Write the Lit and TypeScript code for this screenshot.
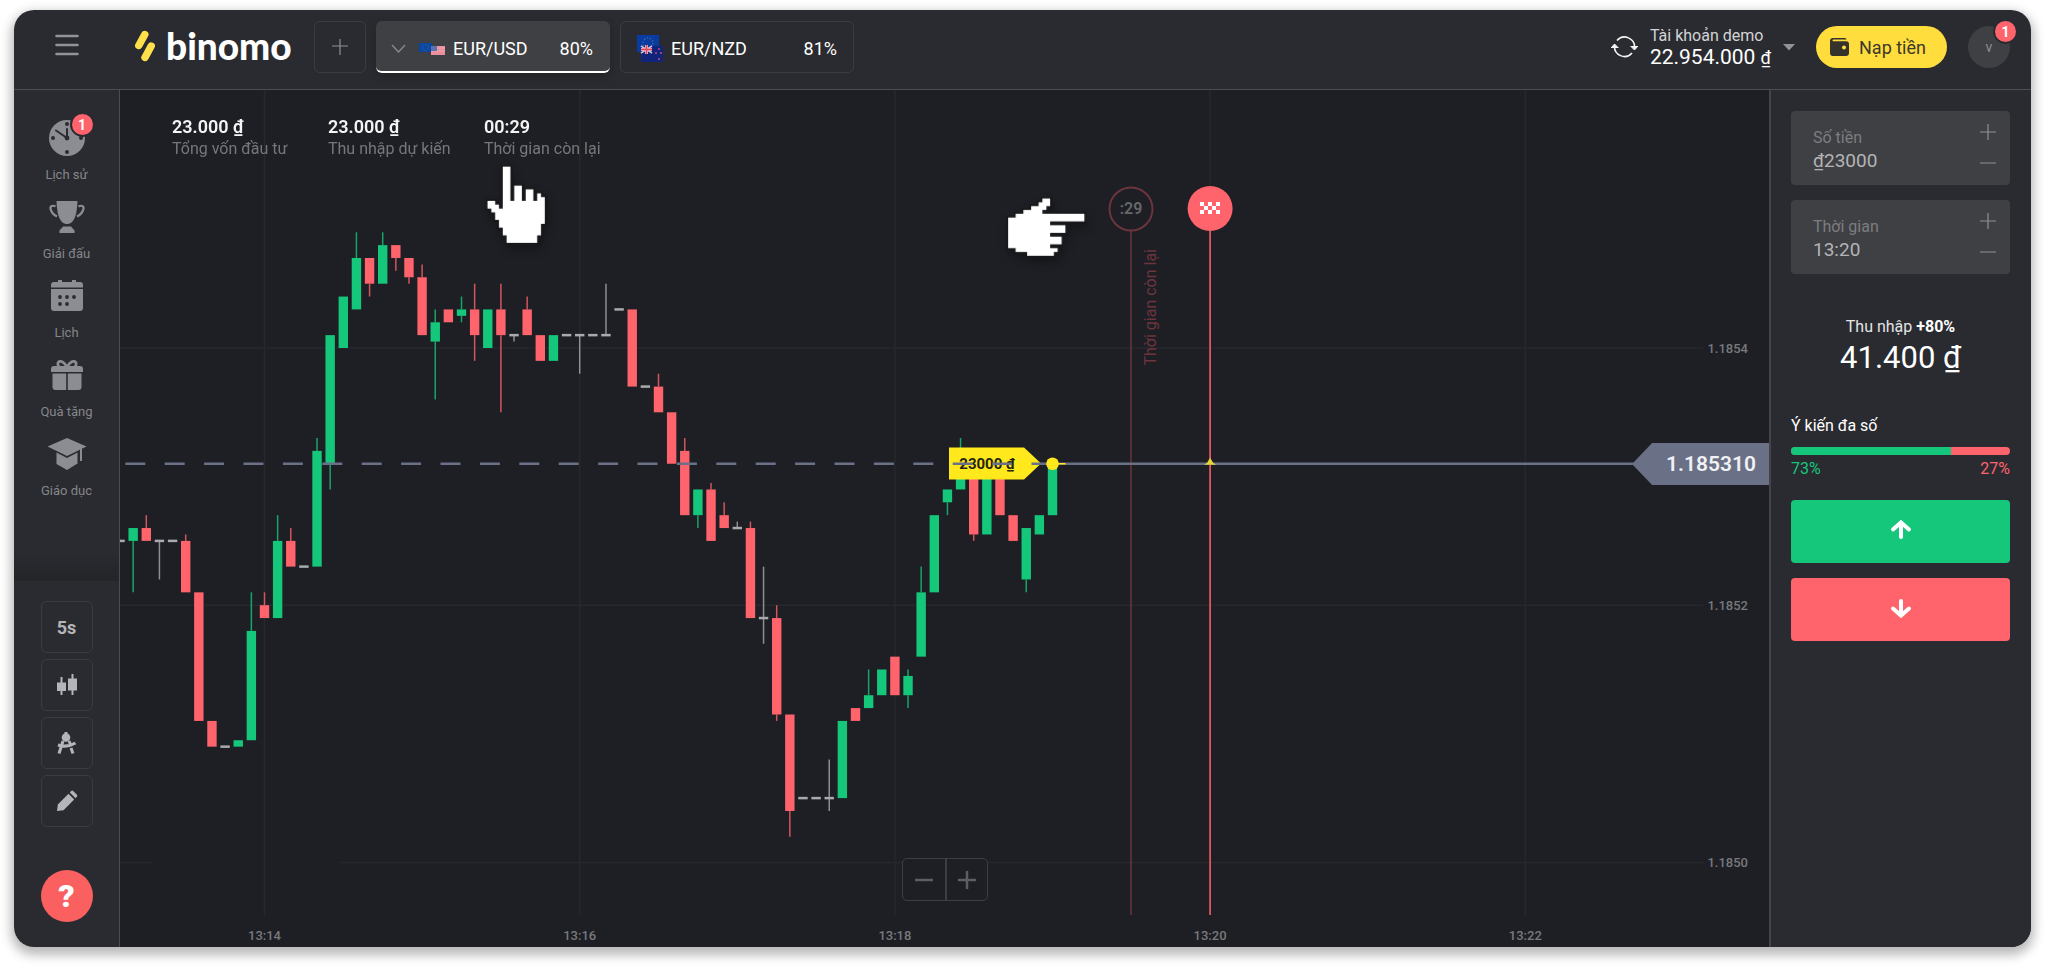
import { LitElement, html, svg, css } from "lit";
import { customElement } from "lit/decorators.js";

type Kind = "up" | "down" | "flat";

interface Candle {
  kind: Kind;
  top: number;
  bottom: number;
  high: number;
  low: number;
}

const c = (kind: Kind, top: number, bottom = top, high = top, low = bottom): Candle => ({ kind, top, bottom, high, low });
const up = (t: number, b: number, h?: number, l?: number) => c("up", t, b, h, l);
const down = (t: number, b: number, h?: number, l?: number) => c("down", t, b, h, l);
const flat = (t: number, h?: number, l?: number) => c("flat", t, t, h, l);

const FIRST_INDEX = -11;
const CANDLES: Candle[] = [
  flat(30), up(28, 30, 28, 38), down(28, 30, 26), flat(30, 30, 36), flat(30), down(30, 38, 29),
  down(38, 58), down(58, 62), flat(62), up(61, 62), up(44, 61, 38), down(40, 42, 38),
  up(30, 42, 26), down(30, 34, 28), flat(34), up(16, 34, 14), up(-2, 18, -2, 22), up(-8, 0),
  up(-14, -6, -18), down(-14, -10, -14, -8), up(-16, -10, -18), down(-16, -14, -16, -12),
  down(-14, -11, -14, -10), down(-11, -2, -13), up(-4, -1, -6, 8), down(-6, -4),
  up(-6, -5, -8, -4), down(-6, -2, -10, 2), up(-6, 0), down(-6, -2, -10, 10), flat(-2, -2, -1),
  down(-6, -2, -8), down(-2, 2), up(-2, 2), flat(-2), flat(-2, -2, 4), flat(-2), flat(-2, -10),
  flat(-6), down(-6, 6), flat(6), down(6, 10, 4), down(10, 18), down(16, 26, 14),
  up(22, 26, 22, 28), down(22, 30, 21), down(26, 28, 24), flat(28, 27), down(28, 42, 27),
  flat(42, 34, 46), down(42, 57, 40, 58), down(57, 72, 57, 76), flat(70), flat(70),
  flat(70, 64, 72), up(58, 70), down(56, 58), up(54, 56, 50), up(50, 54), down(48, 54),
  up(51, 54, 50, 56), up(38, 48, 34), up(26, 38), up(22, 24, 22, 26), up(18, 22, 14),
  down(18, 29, 18, 30), up(18, 29), down(18, 26), down(26, 30), up(28, 36, 28, 38), up(26, 29),
  up(18, 26),
];

const STEP_X = 315.2 / 24;
const STEP_Y = 6.43;
const xAt = (i: number) => 144.5 + i * STEP_X;
const yAt = (k: number) => 258 + k * STEP_Y;

const TIMES = ["13:14", "13:16", "13:18", "13:20", "13:22"];
const PRICES = ["1.1854", "1.1852", "1.1850"];
const NOW = 60;
const PRICE = yAt(18);
const REMAIN_X = 1011;
const HAND =
  "M4 0H6V9H7V5H9V9H10V6H12V9H13V7H14V8H15V15H14V18H13V20H5V18H4V16H3V14H2V12H1V11H0V9H2V10H3V11H4Z";

const icons = {
  clock: svg`<circle cx="20" cy="20" r="18"/><g fill="#2a2b30"><circle cx="20" cy="6" r="2"/><circle cx="6" cy="20" r="2"/><circle cx="34" cy="20" r="2"/><circle cx="20" cy="34" r="2"/><circle cx="20" cy="20" r="2.4"/></g><path d="M20 20V11M20 20L9 12.500" stroke="#2a2b30" stroke-width="2" stroke-linecap="round"/>`,
  trophy: svg`<path d="M9.500 4h21c-.4 9-1.500 17-5.500 21-3 2.800-7 2.800-10 0-4-4-5.100-12-5.500-21z"/><path d="M16 29.500h8l3.500 4V36h-15v-2.500z"/><path d="M8.500 9.500C6 8 3 9 3.500 11.500c.5 3.500 3.500 6.500 6.500 8M31.500 9.500C34 8 37 9 36.500 11.500c-.5 3.500-3.500 6.500-6.500 8" fill="none" stroke="#8c8d92" stroke-width="2.200"/>`,
  calendar: svg`<path d="M7 6h4V4h4v2h10V4h4v2h4q3 0 3 3v2.500H4V9q0-3 3-3zM4 13h32v19q0 3-3 3H7q-3 0-3-3z"/><g fill="#2a2b30"><circle cx="13" cy="21" r="1.900"/><circle cx="20" cy="21" r="1.900"/><circle cx="27" cy="21" r="1.900"/><circle cx="13" cy="28" r="1.900"/><circle cx="20" cy="28" r="1.900"/></g>`,
  gift: svg`<path d="M7 11h26q3 0 3 3v3H4v-3q0-3 3-3zM5.500 18.500h13.700V35H8.500Q5.500 35 5.500 32zM20.800 18.500h13.700V32q0 3-3 3H20.800z"/><path d="M19.500 11.500C16 5 10 5 11 10c.3 1.500 1 2 2 2M20.500 11.500C24 5 30 5 29 10c-.3 1.500-1 2-2 2" fill="none" stroke="#8c8d92" stroke-width="2.800"/>`,
  education: svg`<path d="M.5 12.500L20 4l19.500 8.500L20 22zM9.500 18.500L20 24l10.500-5.500v11L20 36 9.500 30z"/><path d="M34 15v12" stroke="#8c8d92" stroke-width="2"/>`,
};

const NAV = [
  { icon: icons.clock, label: "Lịch sử", badge: "1" },
  { icon: icons.trophy, label: "Giải đấu" },
  { icon: icons.calendar, label: "Lịch" },
  { icon: icons.gift, label: "Quà tặng" },
  { icon: icons.education, label: "Giáo dục" },
];

@customElement("price-chart")
export class PriceChart extends LitElement {
  static styles = css`
    :host { display: grid; min-width: 0; background: #1e1f24; font-family: Roboto, "Liberation Sans", sans-serif; overflow: hidden; }
    .plot, .stats, .tag, .zoom { grid-area: 1 / 1; }
    .plot { display: block; width: 100%; height: 100%; }
    .grid { stroke: #27282c; stroke-width: 1.500; }
    .axis { fill: #78797d; font-size: 13px; font-weight: 500; }
    .up { fill: #15c77b; stroke: #15c77b; }
    .down { fill: #ff636c; stroke: #ff636c; }
    .flat { fill: #a9aaae; stroke: #a9aaae; }
    .body { stroke: none; }
    .wick { stroke-width: 1.500; opacity: 0.8; }
    .price { stroke: #6a7085; stroke-width: 2.600; }
    .remain { fill: #6c353d; font-size: 16px; }
    .seconds { fill: #66676b; font-size: 16px; font-weight: 600; }
    .bet { fill: #24240f; font-size: 15px; font-weight: 700; }
    .stats { align-self: start; display: grid; grid-template-columns: repeat(3, 156px); margin: 25px 0 0 52px; padding: 0; z-index: 1; }
    .stats div { display: flex; flex-direction: column; }
    .value { order: 0; margin: 0; color: #f4f4f5; font-size: 18px; line-height: 24px; font-weight: 600; white-space: nowrap; }
    .name { order: 1; color: #76777b; font-size: 16px; line-height: 20px; white-space: nowrap; }
    .tag { align-self: start; justify-self: end; z-index: 1; box-sizing: border-box; height: 42px; margin-top: 353px; padding: 0 13px 0 34px; background: #6a7085; color: #f0f1f4; font-size: 21px; line-height: 43px; font-weight: 600; clip-path: polygon(0 50%, 20px 0, 100% 0, 100% 100%, 20px 100%); }
    .zoom { align-self: end; justify-self: center; z-index: 1; display: flex; margin-bottom: 46px; border: 1px solid #3d3e42; border-radius: 5px; background: #1e1f24; }
    .zoom button { display: grid; place-items: center; box-sizing: border-box; width: 42px; height: 41px; padding: 0; border: 0; background: none; }
    .zoom button + button { border-left: 2px solid #3d3e42; }
  `;

  private candle(d: Candle, n: number) {
    const x = xAt(FIRST_INDEX + n);
    const isFlat = d.kind === "flat";
    const top = yAt(d.top) - (isFlat ? 1.25 : 0);
    const height = isFlat ? 2.5 : (d.bottom - d.top) * STEP_Y;
    return svg`<g class=${d.kind}>
      ${d.high < d.top ? svg`<line class="wick" x1=${x} x2=${x} y1=${yAt(d.high)} y2=${yAt(d.top)}></line>` : ""}
      ${d.low > d.bottom ? svg`<line class="wick" x1=${x} x2=${x} y1=${yAt(d.bottom)} y2=${yAt(d.low)}></line>` : ""}
      <rect class="body" x=${x - 4.7} y=${top} width="9.4" height=${height}></rect>
    </g>`;
  }

  render() {
    const now = xAt(NOW);
    const end = xAt(72);
    return html`
      <svg class="plot" role="img" aria-label="EUR/USD">
        ${TIMES.map((t, i) => svg`
          <line class="grid" x1=${xAt(i * 24)} x2=${xAt(i * 24)} y1="0" y2="825"></line>
          <text class="axis" text-anchor="middle" x=${xAt(i * 24)} y="850">${t}</text>`)}
        ${PRICES.map((p, i) => svg`
          ${i === 2
            ? svg`<line class="grid" x1="0" x2="33" y1=${yAt(80)} y2=${yAt(80)}></line>
                <line class="grid" x1="220" x2="96%" y1=${yAt(80)} y2=${yAt(80)}></line>`
            : svg`<line class="grid" x1="0" x2="96%" y1=${yAt(i * 40)} y2=${yAt(i * 40)}></line>`}
          <text class="axis" text-anchor="end" x="100%" dx="-21" y=${yAt(i * 40) + 5}>${p}</text>`)}
        ${CANDLES.map((d, n) => this.candle(d, n))}

        <line x1=${REMAIN_X} x2=${REMAIN_X} y1="141" y2="825" stroke="#6c353d" stroke-width="1.5"></line>
        <circle cx=${REMAIN_X} cy="119" r="21.5" fill="#1e1f24" stroke="#6c353d" stroke-width="2"></circle>
        <text class="seconds" text-anchor="middle" x=${REMAIN_X} y="124">:29</text>
        <text class="remain" text-anchor="end" transform="translate(1036 159) rotate(-90)">Thời gian còn lại</text>

        <line x1=${end} x2=${end} y1="141" y2="825" stroke="#e0545d" stroke-width="1.8"></line>
        <circle cx=${end} cy="118.5" r="22.5" fill="#ff636c"></circle>
        <g transform="translate(1080 112)" fill="#fff">
          <path d="M0 0h4v4h4v4h-4v4h-4v-4h4v-4h-4zM8 0h4v4h-4zM8 8h4v4h-4zM12 4h4v4h-4zM16 0h4v4h-4zM16 8h4v4h-4z"></path>
        </g>

        <path d="M829 357.5h75l17 16-17 16h-75z" fill="#ffe81c"></path>
        <text class="bet" text-anchor="middle" x="867" y="379">23000 ₫</text>
        <line class="price" x1="5.300" x2=${now} y1=${PRICE} y2=${PRICE} stroke-dasharray="20 19.4"></line>
        <line class="price" x1=${now} x2="96%" y1=${PRICE} y2=${PRICE}></line>
        <line x1=${now} x2=${now + 13} y1=${PRICE} y2=${PRICE} stroke="#ffe81c" stroke-width="1.500"></line>
        <circle cx=${now} cy=${PRICE} r="6.300" fill="#ffe81c"></circle>
        <path d=${`M${end - 6} ${PRICE + 1}L${end - 3} ${PRICE - 1}L${end} ${PRICE - 6}L${end + 3} ${PRICE - 1}L${end + 6} ${PRICE + 1}z`} fill="#e6d43a"></path>

        <g fill="#fff" stroke="#17181b" stroke-width="1" paint-order="stroke" style="filter: drop-shadow(2px 5px 4px rgba(0, 0, 0, 0.3))">
          <path transform="translate(367.5 76.500) scale(3.820)" d=${HAND}></path>
          <path transform="translate(964.500 108.500) rotate(90) scale(3.820)" d=${HAND}></path>
        </g>
      </svg>
      <dl class="stats">
        <div><dt class="name">Tổng vốn đầu tư</dt><dd class="value">23.000 ₫</dd></div>
        <div><dt class="name">Thu nhập dự kiến</dt><dd class="value">23.000 ₫</dd></div>
        <div><dt class="name">Thời gian còn lại</dt><dd class="value">00:29</dd></div>
      </dl>
      <div class="tag">1.185310</div>
      <div class="zoom">
        <button type="button" aria-label="−"><svg width="18" height="18" stroke="#5d5e62" stroke-width="2.500"><path d="M0 9h18"></path></svg></button>
        <button type="button" aria-label="+"><svg width="18" height="18" stroke="#5d5e62" stroke-width="2.500"><path d="M0 9h18M9 0v18"></path></svg></button>
      </div>
    `;
  }
}

@customElement("trade-panel")
export class TradePanel extends LitElement {
  static styles = css`
    :host { display: block; box-sizing: border-box; padding: 21px 21px 21px 20px; border-left: 2px solid #434448; background: #2a2b30; color: #fff; font-family: Roboto, "Liberation Sans", sans-serif; }
    .field { display: flex; justify-content: space-between; box-sizing: border-box; height: 74px; margin-bottom: 15px; padding: 0 12px 0 22px; border-radius: 4px; background: #3f4044; }
    .entry { display: flex; flex-direction: column; flex: 1; min-width: 0; padding-top: 16px; }
    .entry label { color: #7c7d80; font-size: 16px; line-height: 22px; }
    .entry input { width: 100%; padding: 0; border: 0; outline: 0; background: none; color: #b3b4b6; font: 19px/24px Roboto, "Liberation Sans", sans-serif; }
    .steps { display: flex; flex-direction: column; justify-content: center; padding-bottom: 2px; }
    .steps button { display: grid; place-items: center; width: 20px; height: 31px; padding: 0; border: 0; background: none; }
    .income { margin-top: 42px; text-align: center; font-size: 16px; line-height: 22px; color: #e4e4e6; }
    .income strong { font-weight: 700; color: #fff; }
    .payout { text-align: center; font-size: 31px; line-height: 40px; }
    .opinion { margin-top: 38px; font-size: 16px; line-height: 20px; }
    .bar { display: flex; height: 8px; margin-top: 11px; border-radius: 4px; overflow: hidden; background: #ff636c; }
    .fill { background: #15c77b; }
    .shares { display: flex; justify-content: space-between; margin-bottom: 17px; font-size: 16px; line-height: 28px; }
    .share-up { color: #15c77b; }
    .share-down { color: #ff636c; }
    .trade { display: grid; place-items: center; width: 100%; height: 63px; margin-bottom: 15px; padding: 0 0 3px; border: 0; border-radius: 4px; }
    .trade.call { background: #15c77b; }
    .trade.put { background: #ff636c; }
  `;

  private field(id: string, label: string, value: string) {
    return html`<div class="field">
      <div class="entry"><label for=${id}>${label}</label><input id=${id} .value=${value} /></div>
      <div class="steps">
        <button type="button" aria-label="+"><svg width="16" height="16" stroke="#8f9093" stroke-width="1.200"><path d="M0 8h16M8 0v16"></path></svg></button>
        <button type="button" aria-label="−"><svg width="16" height="16" stroke="#8f9093" stroke-width="1.200"><path d="M0 8h16"></path></svg></button>
      </div>
    </div>`;
  }

  render() {
    const share = 73;
    return html`
      ${this.field("amount", "Số tiền", "₫23000")}
      ${this.field("expiry", "Thời gian", "13:20")}
      <div class="income">Thu nhập <strong>+80%</strong></div>
      <div class="payout">41.400 ₫</div>
      <div class="opinion">Ý kiến đa số</div>
      <div class="bar"><div class="fill" style="width: ${share}%"></div></div>
      <div class="shares"><span class="share-up">${share}%</span><span class="share-down">${100 - share}%</span></div>
      <button class="trade call" type="button" aria-label="↑"><svg width="22" height="22" fill="none" stroke="#fff" stroke-width="4" stroke-linecap="round"><path d="M11 5v13"></path><path d="M3 10.500L11 3.500l8 7"></path></svg></button>
      <button class="trade put" type="button" aria-label="↓"><svg width="22" height="22" fill="none" stroke="#fff" stroke-width="4" stroke-linecap="round"><path d="M11 4v13"></path><path d="M3 11.500l8 7 8-7"></path></svg></button>
    `;
  }
}

@customElement("app-root")
export class AppRoot extends LitElement {
  static styles = css`
    :host { box-sizing: border-box; min-height: 100vh; padding: 10px 17px 21px 14px; display: grid; background: #fff; color: #fff; font-family: Roboto, "Liberation Sans", sans-serif; }
    button { padding: 0; border: 0; background: none; color: inherit; font-family: inherit; }
    .window { display: grid; grid-template: auto 1fr / 106px minmax(0, 1fr) 262px; border-radius: 20px; overflow: hidden; background: #2a2b30; }
    .frame { display: grid; border-radius: 20px; box-shadow: 0 5px 11px 3px rgba(0, 0, 0, 0.28); }
    .header { grid-column: 1 / -1; display: flex; align-items: center; box-sizing: border-box; height: 80px; padding: 0 21px 5px 0; border-bottom: 1px solid #4c4d51; }
    .menu { display: grid; place-items: center; width: 106px; height: 52px; padding-bottom: 4px; }
    .logo { display: flex; align-items: center; gap: 11px; box-sizing: border-box; min-width: 194px; padding: 0 0 3px 15px; color: #fff; text-decoration: none; font: 900 37px/44px Lato, sans-serif; }
    .tabs { display: flex; gap: 10px; }
    .box { box-sizing: border-box; height: 52px; border: 1px solid #3b3c40; border-radius: 6px; }
    .add { display: grid; place-items: center; width: 52px; }
    .tab { display: flex; align-items: center; width: 234px; padding: 4px 16px 0; font-size: 18px; line-height: 24px; }
    .tab.active { padding: 5px 17px 0 15px; border: 0; border-bottom: 2px solid #fff; background: #3f4044; box-shadow: 0 4px 10px rgba(0, 0, 0, 0.2); }
    .chevron { margin-right: 13px; }
    .pair { margin-left: 8px; }
    .rate { margin-left: auto; }
    .account { display: flex; align-items: center; gap: 12px; margin-left: auto; }
    .balance { display: flex; flex-direction: column; align-items: flex-start; text-align: left; }
    .kind { color: #d4d4d6; font-size: 16px; line-height: 20px; }
    .sum { font-size: 21px; line-height: 23px; white-space: nowrap; }
    .sum small { font-size: 18px; }
    .deposit { display: flex; align-items: center; gap: 10px; height: 42px; margin: 0 21px; padding: 0 21px 0 14px; border-radius: 21px; background: #ffdd3c; color: #3b382c; font-size: 18px; white-space: nowrap; }
    .avatar { position: relative; width: 42px; height: 42px; border-radius: 50%; background: #3f4044; color: #8d8e92; font-size: 14px; }
    .badge { position: absolute; display: grid; place-items: center; width: 21px; height: 21px; border: 2px solid #2a2b30; border-radius: 50%; background: #ff636c; color: #fff; font-size: 14px; font-weight: 700; }
    .avatar .badge { top: -7px; right: -8px; }
    .side { display: flex; flex-direction: column; box-sizing: border-box; border-right: 1px solid #4c4d51; }
    .nav { display: flex; flex-direction: column; box-sizing: border-box; height: 491px; padding-top: 28px; background: linear-gradient(transparent 460px, #242529 491px); }
    .link { display: flex; flex-direction: column; align-items: center; gap: 8px; height: 79px; color: #85868a; font-size: 13px; line-height: 18px; text-decoration: none; }
    .icon { position: relative; height: 40px; }
    .icon .badge { top: -6px; right: -8px; }
    .icon svg { display: block; fill: #8c8d92; }
    .tools { display: flex; flex-direction: column; align-items: center; gap: 6px; padding-top: 20px; }
    .tool { display: grid; place-items: center; width: 52px; color: #b4b5b8; fill: #b4b5b8; font-size: 18px; font-weight: 700; }
    .help { align-self: center; width: 52px; height: 52px; margin: auto 0 25px; border-radius: 50%; background: #fa605f; font-size: 32px; font-weight: 900; }
  `;

  render() {
    return html`<div class="frame"><div class="window">
      <header class="header">
        <button class="menu" type="button" aria-label="Menu">
          <svg width="24" height="22" stroke="#929397" stroke-width="2.600" stroke-linecap="round"><path d="M1.500 2h21M1.500 11h21M1.500 20h21"></path></svg>
        </button>
        <a class="logo" href="#">
          <svg width="20" height="32" viewBox="0 0 20 32" stroke="#ffe04a" stroke-width="7.400" stroke-linecap="round"><path d="M3.800 15.500L9.800 4.500M10 27.500L16.200 16"></path></svg>
          binomo
        </a>
        <div class="tabs">
          <button class="box add" type="button" aria-label="+"><svg width="16" height="16" stroke="#8f9093" stroke-width="1.200"><path d="M0 7h16M8 0v16"></path></svg></button>
          <button class="box tab active" type="button">
            <svg class="chevron" width="15" height="9" fill="none" stroke="#85868a" stroke-width="1.500"><path d="M1 1l6.500 7L14 1"></path></svg>
            <svg width="26" height="26" viewBox="0 0 26 26"><path d="M0 7h13v9H0z" fill="#0b46a0"></path><circle cx="6.500" cy="11.500" r="2.800" fill="none" stroke="#2c66a0" stroke-dasharray="1.500 1"></circle><path d="M12 10h14v9H12z" fill="#ea8d9c"></path><path d="M12 12h14M12 15h14" stroke="#f0a5b0"></path><path d="M12 10h6v5h-6z" fill="#5873ae"></path></svg>
            <span class="pair">EUR/USD</span><span class="rate">80%</span>
          </button>
          <button class="box tab" type="button">
            <svg width="26" height="28" viewBox="0 0 26 28"><path d="M0 0h22v17H0z" fill="#0a3ba3"></path><circle cx="11" cy="8" r="5" fill="none" stroke="#3b6f82" stroke-width="1.200" stroke-dasharray="1.500 1.600"></circle><path d="M4 11h22v16H4z" fill="#10247c"></path><path d="M4 11l11 7M15 11L4 18" stroke="#c3c4e2" stroke-width="1.500"></path><path d="M9.500 10v9M4 14.500h11" stroke="#e8b8c8" stroke-width="3"></path><path d="M9.500 10v9M4 14.500h11" stroke="#e0455c" stroke-width="1.500"></path><path d="M22 13v2M19 17v2M24 17v2M22 23v2" stroke="#a8437a" stroke-width="1.800"></path></svg>
            <span class="pair">EUR/NZD</span><span class="rate">81%</span>
          </button>
        </div>
        <button class="account" type="button">
          <svg width="27" height="24" viewBox="0 0 27 24" fill="none" stroke="#f4f4f5" stroke-width="1.600"><path d="M6 5.500A10 10 0 0 1 23.500 13M21 18A10 10 0 0 1 3.500 10.500"></path><path d="M0 13l3.500-4 4 4M19.500 11l4 4 3.500-4" fill="#f4f4f5" stroke-width="1"></path></svg>
          <span class="balance"><span class="kind">Tài khoản demo</span><span class="sum">22.954.000 <small>₫</small></span></span>
          <svg width="12" height="7" fill="#929397"><path d="M0 0h12L6 6.500z"></path></svg>
        </button>
        <button class="deposit" type="button">
          <svg width="19" height="18" viewBox="0 0 19 18"><path d="M3 0h12q1.500 0 1.500 1.500H3.500q-1 0-1 .9t1 .9H16q3 0 3 2.700v9q0 3-3 3H3q-3 0-3-3V3Q0 0 3 0z" fill="#34322b"></path><circle cx="14" cy="9.500" r="2" fill="#ffdd3c"></circle></svg>
          Nạp tiền
        </button>
        <button class="avatar" type="button">v<span class="badge">1</span></button>
      </header>

      <aside class="side">
        <nav class="nav">
          ${NAV.map((n) => html`<a class="link" href="#">
            <span class="icon"><svg width="40" height="40" viewBox="0 0 40 40">${n.icon}</svg>${n.badge ? html`<span class="badge">${n.badge}</span>` : ""}</span>
            <span>${n.label}</span>
          </a>`)}
        </nav>
        <div class="tools">
          <button class="box tool" type="button">5s</button>
          <button class="box tool" type="button" aria-label="Chart type"><svg width="20" height="22"><path d="M3.500 3h2v5.500H9v8.500H5.500v4h-2v-4H0V8.500h3.500zM14.500 0h2v4.500H20v12h-3.500V21h-2v-4.500H11v-12h3.500z"></path></svg></button>
          <button class="box tool" type="button" aria-label="Indicators"><svg width="20" height="22"><circle cx="9" cy="5.500" r="4.300"></circle><path d="M7.500 0h3v4h-3z"></path><path d="M6 9L2 21.500M12 9l1.500 3.500M14 16l2 5.500M1 13q9 3 17.500-2" fill="none" stroke="#b4b5b8" stroke-width="3"></path></svg></button>
          <button class="box tool" type="button" aria-label="Draw"><svg width="22" height="22"><path d="M1 21l.8-6.500L12.500 3.800l5.700 5.700L7.500 20.200zM13.800 2.500l1.400-1.400q1-.9 2-.1l3.700 3.700q.9 1 0 2L19.500 8.200z"></path></svg></button>
        </div>
        <button class="help" type="button">?</button>
      </aside>
      <price-chart></price-chart>
      <trade-panel></trade-panel>
    </div></div>`;
  }
}
